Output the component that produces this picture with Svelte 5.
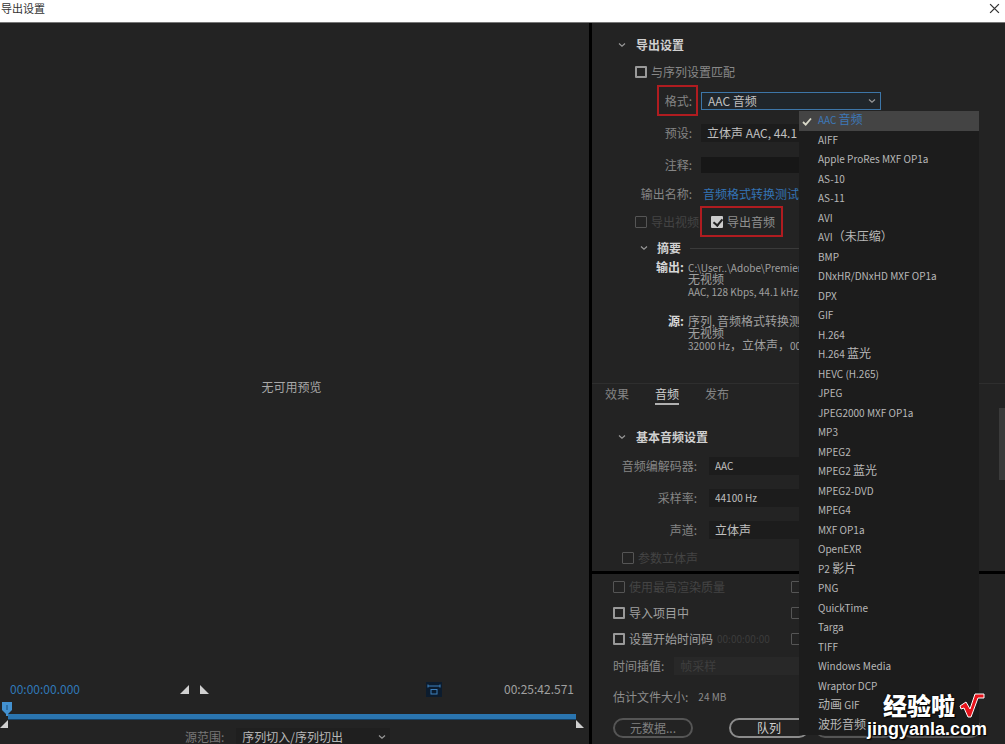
<script>
  const formats = [
    'AAC 音频', 'AIFF', 'Apple ProRes MXF OP1a', 'AS-10', 'AS-11', 'AVI', 'AVI（未压缩）', 'BMP',
    'DNxHR/DNxHD MXF OP1a', 'DPX', 'GIF', 'H.264', 'H.264 蓝光', 'HEVC (H.265)', 'JPEG',
    'JPEG2000 MXF OP1a', 'MP3', 'MPEG2', 'MPEG2 蓝光', 'MPEG2-DVD', 'MPEG4', 'MXF OP1a', 'OpenEXR',
    'P2 影片', 'PNG', 'QuickTime', 'Targa', 'TIFF', 'Windows Media', 'Wraptor DCP', '动画 GIF', '波形音频'
  ];
  const tabs = ['效果', '音频', '发布'];
  let selected = $state('AAC 音频');
  let tab = $state('音频');

  // Latin runs are set smaller than the Chinese ones beside them.
  const runs = (text) => text.match(/[\u0000-\u2fff]+|[\u3000-\uffff]+/g) ?? [];
  const isLatin = (run) => run.charCodeAt(0) < 0x3000;
</script>

{#snippet chevron()}
  <svg class="chevron" viewBox="0 0 8 6" aria-hidden="true"><path d="M1 1.5 L4 4.2 L7 1.5" /></svg>
{/snippet}

{#snippet mixed(text)}{#each runs(text) as run}<span class:latin={isLatin(run)}>{run}</span>{/each}{/snippet}

<div class="window">
  <header>
    <h1>导出设置</h1>
    <button class="close" aria-label="关闭">
      <svg viewBox="0 0 10 10"><path d="M1 1 L9 9 M9 1 L1 9" /></svg>
    </button>
  </header>

  <main>
    <section class="preview">
      <div class="stage">无可用预览</div>
      <div class="transport">
        <span class="time current">00:00:00.000</span>
        <div class="marks">
          <button aria-label="设置入点"><svg viewBox="0 0 9 9"><path d="M9 0 V9 H0 Z" /></svg></button>
          <button aria-label="设置出点"><svg viewBox="0 0 9 9"><path d="M0 0 V9 H9 Z" /></svg></button>
        </div>
        <button class="aspect" aria-label="长宽比校正">
          <svg viewBox="0 0 16 15">
            <rect width="16" height="15" fill="#0c1c2e" stroke="none" />
            <path d="M2 4 H14 M2 2.5 V5.5 M14 2.5 V5.5" />
            <rect x="5" y="7.5" width="6" height="4.5" fill="none" />
          </svg>
        </button>
        <span class="time total">00:25:42.571</span>
      </div>
      <div class="timeline">
        <div class="bar"></div>
        <svg class="head" viewBox="0 0 10 14"><path d="M0 0 H10 V8 L6 12 V14 H4 V12 L0 8 Z" /><path d="M5 3 V8" stroke="#174a78" /></svg>
        <svg class="in" viewBox="0 0 8 8"><path d="M8 0 V8 H0 Z" /></svg>
        <svg class="out" viewBox="0 0 8 8"><path d="M0 0 V8 H8 Z" /></svg>
      </div>
      <div class="range">
        <label for="range">源范围:</label>
        <div class="pick">
          <select id="range"><option>序列切入/序列切出</option></select>
          {@render chevron()}
        </div>
      </div>
    </section>

    <section class="side">
      <div class="settings">
        <h2>{@render chevron()}导出设置</h2>
        <label class="check match"><input type="checkbox" />与序列设置匹配</label>
        <div class="row format">
          <label for="format"><span class="mark">格式:</span></label>
          <div class="pick active">
            <select id="format" bind:value={selected}>
              {#each formats as f}<option>{f}</option>{/each}
            </select>
            {@render chevron()}
          </div>
        </div>
        <div class="row preset">
          <label for="preset">预设:</label>
          <div class="pick"><select id="preset"><option>立体声 AAC, 44.1</option></select></div>
        </div>
        <div class="row">
          <label for="note">注释:</label>
          <input id="note" class="note" type="text" />
        </div>
        <div class="row name">
          <span>输出名称:</span>
          <a href="#output">音频格式转换测试</a>
        </div>
        <div class="exports">
          <label class="check off"><input type="checkbox" disabled />导出视频</label>
          <label class="check mark audio"><input type="checkbox" checked />导出音频</label>
        </div>
        <h3>{@render chevron()}摘要<i></i></h3>
        <dl>
          <dt>输出:</dt>
          <dd>
            <div>{@render mixed('C:\\User..\\Adobe\\Premier')}</div>
            <div>无视频</div>
            <div>{@render mixed('AAC, 128 Kbps, 44.1 kHz,')}</div>
          </dd>
          <dt>源:</dt>
          <dd>
            <div>{@render mixed('序列, 音频格式转换测')}</div>
            <div>无视频</div>
            <div>{@render mixed('32000 Hz，立体声，00')}</div>
          </dd>
        </dl>
      </div>

      <div class="details">
        <nav>
          {#each tabs as t}
            <button class:on={t === tab} onclick={() => (tab = t)}>{t}</button>
          {/each}
        </nav>
        <h2>{@render chevron()}基本音频设置</h2>
        <div class="row wide">
          <label for="codec">音频编解码器:</label>
          <div class="pick small"><select id="codec"><option>AAC</option></select></div>
        </div>
        <div class="row wide">
          <label for="rate">采样率:</label>
          <div class="pick small"><select id="rate"><option>44100 Hz</option></select></div>
        </div>
        <div class="row wide">
          <label for="channels">声道:</label>
          <div class="pick"><select id="channels"><option>立体声</option></select></div>
        </div>
        <label class="check off stereo"><input type="checkbox" disabled />参数立体声</label>
        <div class="scroll"></div>
      </div>

      <div class="output">
        <div class="pair">
          <label class="check off"><input type="checkbox" disabled />使用最高渲染质量</label>
          <span class="check off"><input type="checkbox" disabled aria-label="使用预览" /></span>
        </div>
        <div class="pair">
          <label class="check"><input type="checkbox" />导入项目中</label>
          <span class="check off"><input type="checkbox" disabled aria-label="使用代理" /></span>
        </div>
        <div class="pair">
          <label class="check"><input type="checkbox" />设置开始时间码<span class="code">00:00:00:00</span></label>
          <span class="check off"><input type="checkbox" disabled aria-label="仅渲染" /></span>
        </div>
        <div class="interp">
          <label for="interp">时间插值:</label>
          <div class="pick"><select id="interp" disabled><option>帧采样</option></select></div>
        </div>
        <div class="size"><span>估计文件大小:</span><span>24 MB</span></div>
        <div class="actions">
          <button class="dim">元数据...</button>
          <button class="queue">队列</button>
          <button class="dim" aria-label="导出"></button>
          <button class="dim" aria-label="取消"></button>
        </div>
      </div>
    </section>
  </main>

  <ul class="menu" role="listbox" aria-label="格式">
    {#each formats as f}
      <li role="option" aria-selected={f === selected}>
        <button class:current={f === selected} onclick={() => (selected = f)}>
          {#if f === selected}
            <svg viewBox="0 0 10 9" aria-hidden="true"><path d="M1 5 L3.7 7.6 L9 1.5" /></svg>
          {/if}
          {@render mixed(f)}
        </button>
      </li>
    {/each}
  </ul>

  <div class="brand">
    <div class="top">
      <span>经验啦</span>
      <svg viewBox="0 0 26 26" aria-hidden="true"><path d="M1 14 L7 10 L11 17 L16 2 H25 V6 H19 L12 25 H9 L5 16 L2 17 Z" /></svg>
    </div>
    <span class="site">jingyanla.com</span>
  </div>
</div>

<style>
  :global(body) { margin: 0; background: #232323; }
  * { box-sizing: border-box; }
  .window {
    position: relative;
    display: flex;
    flex-direction: column;
    min-height: 100vh;
    overflow: hidden;
    background: #232323;
    color: #a0a0a0;
    font-family: "Noto Sans CJK SC", "Noto Sans", sans-serif;
    font-size: 12px;
    line-height: 16px;
  }
  button, select, input { font: inherit; color: inherit; margin: 0; padding: 0; border: 0; background: none; }
  h1, h2, h3, dl, dd, ul { margin: 0; padding: 0; font-size: 12px; }
  svg { display: block; flex: none; }
  .latin { font-size: 10px; white-space: pre; }
  header {
    display: flex;
    justify-content: space-between;
    height: 23px;
    padding: 0 5px 0 1px;
    background: #fff;
    border-bottom: 1px solid #777;
    color: #333;
  }
  h1 { font-size: 11px; font-weight: 400; line-height: 17px; }
  .close { display: flex; align-items: center; height: 17px; }
  .close svg { width: 11px; height: 11px; stroke: #333; stroke-width: 1.2; }
  main { flex: 1; display: grid; grid-template-columns: 1fr 416px; }

  .preview { display: flex; flex-direction: column; min-width: 0; }
  .stage { flex: 1; display: grid; place-items: center; padding: 74px 6px 0 0; color: #a8a8a8; }
  .transport { display: flex; align-items: center; height: 24px; padding: 0 15px 0 10px; }
  .time { flex: none; }
  .current { color: #2f78b8; }
  .total { margin-left: 62px; }
  .marks { display: flex; gap: 11px; margin-left: 100px; }
  .marks svg { width: 9px; height: 9px; fill: #d0d0d0; }
  .aspect { margin-left: auto; }
  .aspect svg { width: 16px; height: 15px; stroke: #3d80bd; }
  .timeline { position: relative; height: 28px; padding: 13px 13px 0 8px; }
  .bar { height: 6px; background: #2a75b0; border-bottom: 1px solid #164267; }
  .timeline svg { position: absolute; fill: #d0d0d0; width: 8px; height: 8px; top: 19px; }
  .timeline .head { left: 2px; top: 1px; width: 10px; height: 14px; fill: #4391d0; }
  .in { left: 0; }
  .out { right: 5px; }
  .range { display: flex; align-items: center; gap: 12px; height: 15px; padding-left: 185px; color: #777; }
  .range .pick { width: 154px; background: #1f1f1f; color: #b8b8b8; }
  .range select { padding: 0 2px; }

  .pick { position: relative; display: flex; align-items: center; height: 18px; background: #1c1c1c; color: #c0c0c0; }
  .pick select { appearance: none; width: 100%; height: 16px; padding: 0 6px; line-height: 16px; outline: 0; }
  .pick.small { font-size: 10px; }
  .pick .chevron { position: absolute; right: 4px; }
  .chevron { width: 8px; height: 6px; fill: none; stroke: #999; stroke-width: 1.2; }

  .side { display: flex; flex-direction: column; min-width: 0; border-left: 3px solid #000; white-space: nowrap; }
  .settings { padding-top: 10px; height: 360px; }
  h2 { display: flex; align-items: center; gap: 10px; height: 24px; padding-left: 26px; color: #d0d0d0; font-weight: 700; }
  .check { display: flex; align-items: center; gap: 4px; }
  .check input {
    appearance: none;
    position: relative;
    flex: none;
    width: 12px;
    height: 12px;
    border: 2px solid #999;
    border-radius: 1px;
  }
  .check input:checked { background: #ccc; border-color: #ccc; }
  .check input:checked::before {
    content: "";
    position: absolute;
    left: 2px;
    top: -1px;
    width: 4px;
    height: 7px;
    border: solid #222;
    border-width: 0 2px 2px 0;
    transform: rotate(40deg);
  }
  .check.off { color: #444; }
  .check.off input { border: 1px solid #555; }
  .match { height: 30px; padding-left: 43px; color: #888; }
  .row { display: grid; grid-template-columns: 100px 180px; gap: 9px; align-items: center; height: 28px; }
  .row > :first-child { text-align: right; color: #858585; }
  .row.preset { height: 36px; }
  .row.name { height: 30px; }
  .name a { color: #3474b5; text-decoration: none; padding-left: 2px; }
  .row.wide { grid-template-columns: 105px 180px; gap: 12px; height: 32px; }
  .active { border: 1px solid #3d76a8; background: #20262b; }
  .note { height: 16px; background: #171717; }
  .mark { position: relative; }
  .mark::after {
    content: "";
    position: absolute;
    inset: -7px -6px -7px -8px;
    border: 2px solid #b01c20;
    pointer-events: none;
  }
  .exports { display: flex; height: 26px; align-items: center; padding-left: 43px; }
  .exports .off { width: 76px; }
  .exports .audio { color: #909090; }
  .exports .audio::after { inset: -8px -8px -7px -11px; }
  h3 { display: flex; align-items: center; gap: 9px; height: 26px; padding: 0 40px 0 48px; color: #d0d0d0; font-weight: 700; }
  h3 i { flex: 1; height: 1px; background: #3a3a3a; }
  dl { display: grid; grid-template-columns: 92px 1fr; column-gap: 4px; row-gap: 18px; line-height: 12px; }
  dt { text-align: right; color: #d8d8d8; font-weight: 700; }
  dd > div { height: 12px; }

  .details { position: relative; height: 188px; border-top: 1px solid #2e2e2e; }
  nav { display: flex; gap: 26px; padding: 1px 0 20px 13px; color: #858585; }
  nav button { height: 20px; border-bottom: 2px solid transparent; }
  nav .on { color: #d0d0d0; border-color: #b0b0b0; }
  .details h2 { height: 24px; margin-bottom: 1px; }
  .stereo { height: 24px; padding-left: 30px; }
  .scroll { position: absolute; right: 0; top: 24px; width: 6px; height: 72px; background: #3a3a3a; }

  .output { flex: 1; border-top: 3px solid #000; padding-left: 21px; }
  .pair { display: grid; grid-template-columns: 178px 1fr; height: 26px; }
  .code { color: #3c3c3c; font-size: 10px; }
  .interp { display: flex; align-items: center; gap: 10px; height: 28px; color: #8c8c8c; }
  .interp .pick { width: 180px; background: #282828; color: #484848; }
  .size { display: flex; align-items: center; gap: 10px; height: 34px; color: #8c8c8c; }
  .size span + span { font-size: 10px; }
  .actions { display: grid; grid-template-columns: 80px 24px 80px 80px 80px; column-gap: 6px; padding-top: 4px; }
  .actions button { height: 20px; line-height: 16px; border: 2px solid #8c8c8c; border-radius: 10px; color: #d0d0d0; }
  .actions .dim { border-color: #555; color: #808080; }
  .actions .queue { grid-column: 3; }

  .menu {
    position: absolute;
    top: 111px;
    right: 26px;
    bottom: 9px;
    width: 180px;
    display: grid;
    grid-auto-rows: 1fr;
    list-style: none;
    background: #1c1c1c;
    color: #b8b8b8;
  }
  .menu li { display: grid; min-height: 0; }
  .menu button { position: relative; padding: 0 19px 3px; text-align: left; line-height: 16px; white-space: nowrap; }
  .menu .current { background: #444; color: #3d78b8; }
  .menu svg { position: absolute; left: 3px; top: 6px; width: 10px; height: 9px; fill: none; stroke: #d8d8c8; stroke-width: 1.8; }

  .brand { position: absolute; right: 16px; bottom: 4px; width: 122px; color: #fff; font-weight: 900; text-shadow: 0 0 2px #000, 1px 1px 1px #000; }
  .top { display: flex; align-items: center; justify-content: flex-end; gap: 4px; height: 26px; padding-right: 4px; font-size: 24px; line-height: 26px; }
  .top svg { width: 26px; height: 26px; fill: #e8141c; stroke: #fff; stroke-width: 1; }
  .site { display: block; font: 700 18px/22px "Liberation Sans", Arial, sans-serif; }
</style>
